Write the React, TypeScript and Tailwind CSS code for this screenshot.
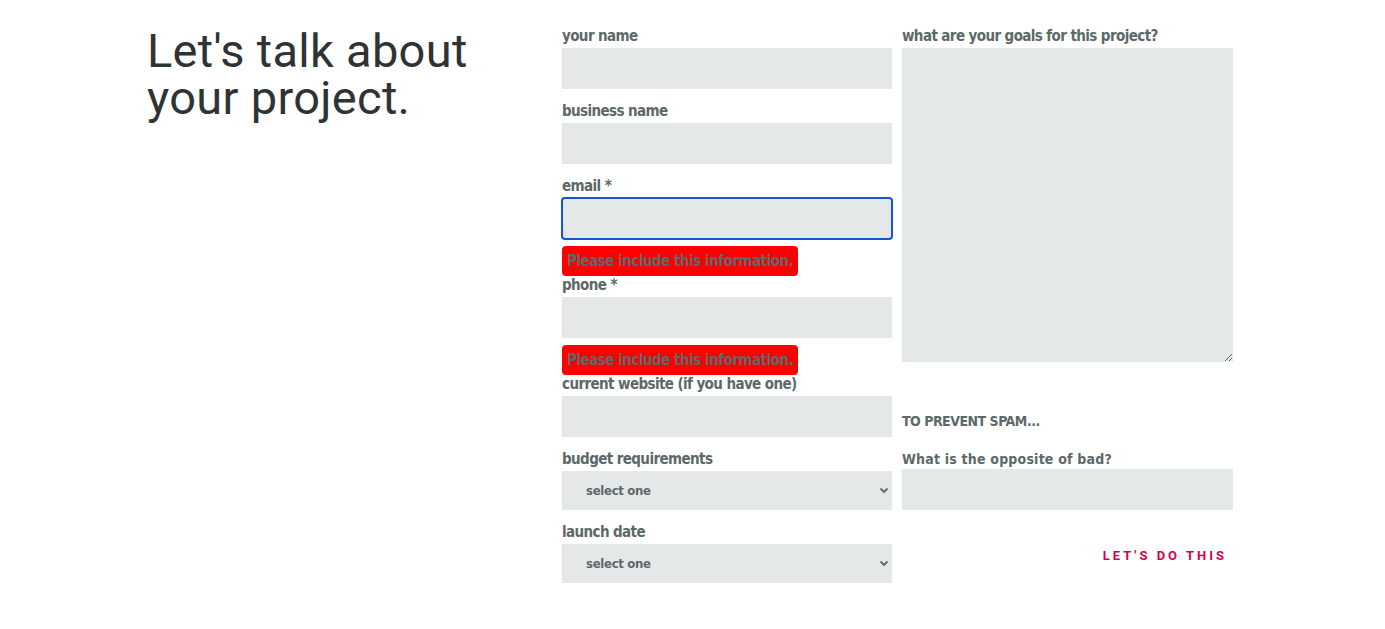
import type { ReactNode } from "react";

const narrow =
  "[font-family:'Liberation_Sans_Narrow','DejaVu_Sans_Condensed',sans-serif] [font-stretch:condensed]";
const label = `block text-[15px] leading-[20px] font-bold tracking-[-0.6px] text-[#5d6869] ${narrow}`;
const box = "block w-full h-[41px] bg-[#e4e8e9] border-0";

function Field({ title, children, className = "" }: { title: string; children: ReactNode; className?: string }) {
  return (
    <div className={className}>
      <label className={label}>{title}</label>
      <div className="mt-[2px]">{children}</div>
    </div>
  );
}

function ErrorTip() {
  return (
    <div
      className={`inline-block h-[30px] rounded-[4px] bg-[#ff0000] px-[5px] text-[15px] leading-[30px] font-bold tracking-[-0.5px] text-[#5d6869] ${narrow}`}
    >
      Please include this information.
    </div>
  );
}

function Select() {
  return (
    <div className="relative h-[39px] bg-[#e4e8e9]">
      <select
        className={`h-full w-full appearance-none bg-transparent pl-[24px] text-[13px] font-bold tracking-[-0.3px] text-[#5d6869] outline-none ${narrow}`}
      >
        <option>select one</option>
      </select>
      <svg className="pointer-events-none absolute right-[3px] top-[16px]" width="10" height="7" viewBox="0 0 10 7">
        <path d="M1.5 1.5 5 5l3.5-3.5" fill="none" stroke="#5d6869" strokeWidth="1.8" />
      </svg>
    </div>
  );
}

export default function App() {
  return (
    <div className="min-h-[629px] bg-white">
      <div className="flex pt-[26px]">
        <div className="w-[562px] shrink-0 pl-[147px]">
          <h1 className="mt-[1px] text-[47px] leading-[47px] font-normal tracking-[0.3px] text-[#2e3334] [font-family:Roboto,sans-serif]">
            Let's talk about
            <br />
            your project.
          </h1>
        </div>

        <form className="flex gap-[10px]" onSubmit={(e) => e.preventDefault()}>
          <div className="w-[330px]">
            <Field title="your name">
              <input className={`${box} outline-none`} />
            </Field>
            <Field title="business name" className="mt-[12px]">
              <input className={`${box} outline-none`} />
            </Field>
            <Field title="email *" className="mt-[12px]">
              <input className={`${box} rounded-[3px] outline-2 outline-solid outline-[#1654d0] -outline-offset-1`} />
            </Field>
            <div className="mt-[7px]">
              <ErrorTip />
            </div>
            <Field title="phone *" className="-mt-[1px]">
              <input className={`${box} outline-none`} />
            </Field>
            <div className="mt-[7px]">
              <ErrorTip />
            </div>
            <Field title="current website (if you have one)" className="-mt-[1px]">
              <input className={`${box} outline-none`} />
            </Field>
            <Field title="budget requirements" className="mt-[12px]">
              <Select />
            </Field>
            <Field title="launch date" className="mt-[12px]">
              <Select />
            </Field>
          </div>

          <div className="w-[331px]">
            <Field title="what are your goals for this project?">
              <textarea className="block h-[314px] w-full resize-y bg-[#e4e8e9] outline-none" />
            </Field>
            <div
              className={`mt-[49px] text-[14px] leading-[20px] font-bold tracking-[-0.5px] uppercase text-[#5d6869] ${narrow}`}
            >
              To prevent spam...
            </div>
            <div className={`mt-[19px] text-[14px] leading-[18px] font-bold tracking-[0.2px] text-[#5d6869] ${narrow}`}>
              What is the opposite of bad?
            </div>
            <input className={`${box} mt-[1px] outline-none`} />
            <div className="mt-[38px] flex justify-end pr-[6px]">
              <button
                type="submit"
                className="text-[13px] leading-[16px] font-bold tracking-[3px] text-[#d6004f] [font-family:Roboto,sans-serif]"
              >
                LET'S DO THIS
              </button>
            </div>
          </div>
        </form>
      </div>
    </div>
  );
}
